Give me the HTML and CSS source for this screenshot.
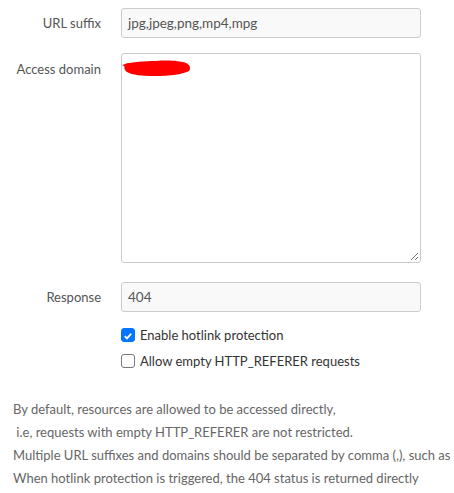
FILE: index.html
```html
<!DOCTYPE html>
<html>
<head>
<meta charset="utf-8">
<link rel="stylesheet" href="styles.css">
</head>
<body>
<div class="page">
  <div class="form">
    <div class="row">
      <label class="label">URL suffix</label>
      <div class="input">jpg,jpeg,png,mp4,mpg</div>
    </div>
    <div class="row row-top">
      <label class="label label-top">Access domain</label>
      <div class="textarea">
        <svg class="scribble" width="70" height="18" viewBox="0 0 70 18">
          <path d="M3 4 C10 2 22 1 34 1 C47 0 58 1 64 3 C68 5 69 8 67 11 C62 14 48 16 32 16 C20 16 10 15 5 12 C2 10 2 7 3 4 Z" fill="#ff0000"/>
          <path d="M0 5 L7 3 L6 8 Z" fill="#ff0000"/>
        </svg>
        <svg class="grip" width="10" height="10" viewBox="0 0 10 10">
          <path d="M9 2 L2 9 M9 6 L6 9" stroke="#777" stroke-width="1"/>
        </svg>
      </div>
    </div>
    <div class="row">
      <label class="label">Response</label>
      <div class="input">404</div>
    </div>
    <div class="checks">
      <div class="check">
        <span class="box box-on">
          <svg width="14" height="14" viewBox="0 0 14 14"><path d="M3.2 7.2 L5.8 9.8 L10.8 4.2" fill="none" stroke="#fff" stroke-width="2"/></svg>
        </span>
        <span>Enable hotlink protection</span>
      </div>
      <div class="check">
        <span class="box"></span>
        <span>Allow empty HTTP_REFERER requests</span>
      </div>
    </div>
  </div>
  <div class="notes">
    <p>By default, resources are allowed to be accessed directly,</p>
    <p>&nbsp;i.e, requests with empty HTTP_REFERER are not restricted.</p>
    <p>Multiple URL suffixes and domains should be separated by comma (,), such as</p>
    <p>When hotlink protection is triggered, the 404 status is returned directly</p>
  </div>
</div>
</body>
</html>
```
FILE: styles.css
```css
html, body {
  margin: 0;
  padding: 0;
  background: #fff;
  overflow: hidden;
}
body {
  font-family: "Lato", "Noto Sans", sans-serif;
  font-size: 13px;
  color: #555;
}
.page {
  width: 454px;
  height: 493px;
  overflow: hidden;
}
.form {
  padding-top: 8px;
  display: flex;
  flex-direction: column;
}
.row {
  display: flex;
  align-items: center;
  margin-bottom: 16px;
}
.row:first-child {
  margin-bottom: 15px;
}
.row-top {
  align-items: flex-start;
  margin-bottom: 19px;
}
.label {
  width: 101px;
  text-align: right;
  padding-right: 20px;
  color: #555;
}
.label-top {
  padding-top: 8px;
}
.input {
  box-sizing: border-box;
  width: 300px;
  height: 30px;
  border: 1px solid #ccc;
  border-radius: 3px;
  background: #f9f9f9;
  padding: 0 6px;
  display: flex;
  align-items: center;
  color: #555;
  font-size: 13.5px;
}
.textarea {
  position: relative;
  box-sizing: border-box;
  width: 300px;
  height: 210px;
  border: 1px solid #ccc;
  border-radius: 3px;
  background: #fff;
}
.scribble {
  position: absolute;
  left: 0;
  top: 6px;
}
.grip {
  position: absolute;
  right: 1px;
  bottom: 1px;
}
.checks {
  margin-left: 121px;
  display: flex;
  flex-direction: column;
  gap: 12px;
}
.check {
  display: flex;
  align-items: center;
  gap: 5px;
  height: 14px;
  color: #333;
}
.box {
  box-sizing: border-box;
  width: 14px;
  height: 14px;
  border: 1px solid #767676;
  border-radius: 3px;
  background: #fff;
  display: flex;
}
.box-on {
  background: #0075ff;
  border-color: #0075ff;
}
.notes {
  margin-top: 30px;
  padding-left: 13px;
  color: #666;
  white-space: nowrap;
}
.notes p {
  margin: 0;
  line-height: 23px;
}
```
